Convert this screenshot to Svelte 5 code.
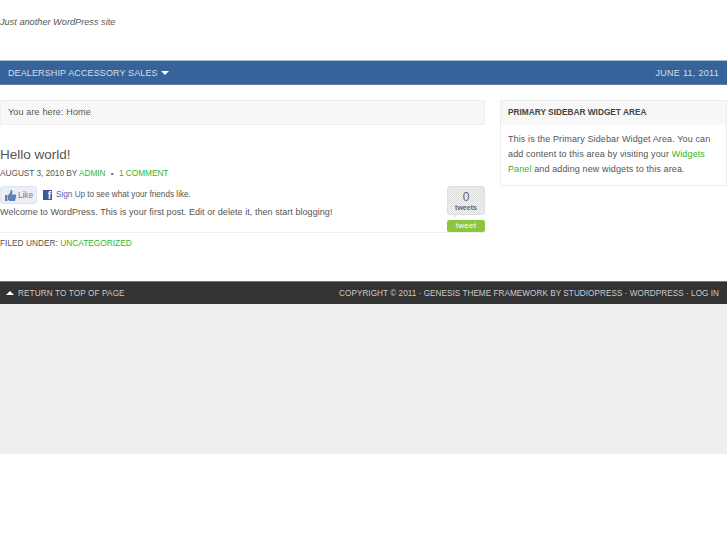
<script>
  const friends = "to see what your friends like.";
</script>

<div class="page">
  <header class="header"><p class="tagline">Just another WordPress site</p></header>

  <nav class="nav">
    <span class="menu">DEALERSHIP ACCESSORY SALES <i class="caret"></i></span>
    <span class="date">JUNE 11, 2011</span>
  </nav>

  <div class="wrap">
    <main class="content">
      <div class="crumbs">You are here: Home</div>
      <h1>Hello world!</h1>
      <div class="meta">AUGUST 3, 2010 BY <a href="#a">ADMIN</a> <span class="dot">•</span> <a href="#c">1 COMMENT</a></div>
      <div class="body">
        <aside class="tweet">
          <div class="count"><b>0</b><span>tweets</span></div>
          <div class="tweet-btn">tweet</div>
        </aside>
        <div class="fb">
          <span class="like">
            <svg width="13" height="13" viewBox="0 0 13 13"><path d="M1 6h2.500v6H1zM4 6.500 6.500 3V1h1.200L8.500 2.500 8 5.500h3.700l.6 1-1.300 5.500H6L4 11z" fill="#5f80bd"/></svg>
            Like
          </span>
          <span class="fbicon">f</span>
          <a class="signup" href="#s">Sign Up</a>
          <span class="friends">{friends}</span>
        </div>
        <p class="post">Welcome to WordPress. This is your first post. Edit or delete it, then start blogging!</p>
      </div>
      <div class="filed">FILED UNDER: <a href="#u">UNCATEGORIZED</a></div>
    </main>

    <aside class="sidebar">
      <h4>PRIMARY SIDEBAR WIDGET AREA</h4>
      <p>This is the Primary Sidebar Widget Area. You can add content to this area by visiting your <a href="#w">Widgets Panel</a> and adding new widgets to this area.</p>
    </aside>
  </div>

  <footer class="footer">
    <span class="top"><i class="up"></i>RETURN TO TOP OF PAGE</span>
    <span class="legal">COPYRIGHT © 2011 · GENESIS THEME FRAMEWORK BY STUDIOPRESS · WORDPRESS · LOG IN</span>
  </footer>
  <div class="below"></div>
</div>

<style>
  :global(body) { margin: 0; background: #fff; }
  .page { width: 727px; font-family: "Liberation Sans", Arial, sans-serif; color: #555; font-size: 10px; overflow: hidden; }
  a { color: #2fb52f; text-decoration: none; }
  .header { height: 60px; box-sizing: border-box; padding-top: 16px; }
  .tagline { margin: 0; font-style: italic; font-size: 9.200px; line-height: 12px; color: #555; }
  .nav { height: 25px; box-sizing: border-box; background: #36649a; border-top: 1px solid #a9b9cc; border-bottom: 1px solid #5f7f9f; display: flex; justify-content: space-between; align-items: center; padding: 0 8px; color: #d5dfea; font-size: 9px; letter-spacing: .12px; }
  .date { letter-spacing: .3px; }
  .caret { display: inline-block; width: 0; height: 0; border: 4px solid transparent; border-top: 4px solid #fff; border-bottom: 0; margin-left: 1px; vertical-align: 1px; }
  .wrap { display: flex; justify-content: space-between; align-items: flex-start; padding-top: 15px; height: 196px; box-sizing: border-box; }
  .content { width: 485px; }
  .crumbs { height: 25px; box-sizing: border-box; padding: 0 7px; line-height: 22px; border: 1px solid #eee; background: repeating-conic-gradient(#f0f0f0 0 25%, #fff 0 50%) 0 0 / 2px 2px; font-size: 9px; letter-spacing: .15px; }
  h1 { margin: 21px 0 0; font-size: 13.500px; line-height: 18px; font-weight: normal; color: #555; }
  .meta { margin-top: 3px; font-size: 8.300px; line-height: 12px; letter-spacing: -.03px; }
  .dot { margin: 0 3px; font-size: 8px; }
  .body { position: relative; }
  .tweet { position: absolute; right: 0; top: 0; width: 38px; }
  .count { position: relative; height: 29px; box-sizing: border-box; border: 1px solid #ddd; border-radius: 3px; background: repeating-conic-gradient(#ddd 0 25%, #f3f3f3 0 50%) 0 0 / 2px 2px; text-align: center; color: #666; }
  .count::after { content: ""; position: absolute; left: 6px; bottom: -4px; border-left: 4px solid #e4e4e4; border-bottom: 4px solid transparent; }
  .count b { display: block; font-weight: normal; font-size: 12px; line-height: 13px; margin-top: 4px; }
  .count span { display: block; font-size: 7px; line-height: 8px; font-weight: bold; color: #666; }
  .tweet-btn { margin-top: 5px; height: 12px; border-radius: 2px; background: #8cc63f; color: #fff; text-align: center; font-size: 8px; line-height: 12px; letter-spacing: .3px; }
  .fb { display: flex; align-items: center; height: 18px; margin-top: 6px; font-size: 8.200px; }
  .like { display: flex; align-items: center; gap: 1px; width: 37px; height: 18px; box-sizing: border-box; padding-left: 3px; background: #eceef5; border: 1px solid #dde3f0; border-radius: 3px; color: #5f7cb5; font-size: 8.200px; }
  .fbicon { width: 9px; height: 10px; margin-left: 6px; background: #3b5998; color: #fff; font-size: 10px; font-weight: bold; line-height: 12px; text-align: right; padding-right: 1px; overflow: hidden; box-sizing: border-box; }
  .signup { color: #4a66a0; margin-left: 4px; margin-top: -1px; }
  .friends { margin-left: 2px; margin-top: -1px; }
  .post { margin: 0; padding-top: 2px; box-sizing: border-box; font-size: 9px; line-height: 12px; letter-spacing: .05px; border-bottom: 1px dotted #ddd; height: 29px; }
  .filed { margin-top: 4px; font-size: 8.300px; line-height: 12px; letter-spacing: .02px; }
  .sidebar { width: 227px; box-sizing: border-box; border: 1px solid #eee; height: 86px; }
  .sidebar h4 { margin: 0; height: 24px; box-sizing: border-box; padding-left: 7px; line-height: 23px; font-size: 8.300px; font-weight: bold; color: #444; background: repeating-conic-gradient(#f0f0f0 0 25%, #fff 0 50%) 0 0 / 2px 2px; }
  .sidebar p { margin: 0; padding: 7px 7px 0; font-size: 9px; line-height: 15px; letter-spacing: .12px; }
  .footer { height: 23px; box-sizing: border-box; background: #333; border-top: 1px solid #777; display: flex; justify-content: space-between; align-items: center; padding: 0 8px 0 6px; color: #ccc; font-size: 8.200px; }
  .top { letter-spacing: .12px; }
  .legal { letter-spacing: .03px; }
  .up { display: inline-block; width: 0; height: 0; border: 4px solid transparent; border-bottom: 4px solid #fff; border-top: 0; margin-right: 4px; vertical-align: 1px; }
  .below { height: 150px; background: #eee; }
</style>
